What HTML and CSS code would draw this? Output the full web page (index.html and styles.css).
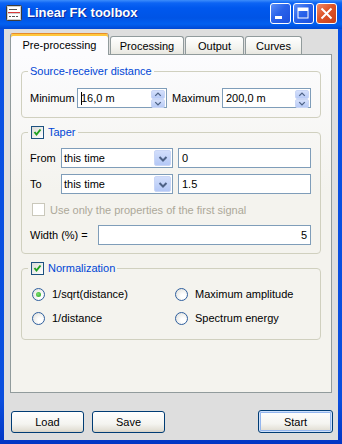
FILE: index.html
```html
<!DOCTYPE html>
<html>
<head>
<meta charset="utf-8">
<link rel="stylesheet" href="styles.css">
</head>
<body>
<div class="window">
  <div class="titlebar">
    <svg class="app-icon" width="16" height="16" viewBox="0 0 16 16">
      <rect x="0.5" y="0.5" width="15" height="15" rx="1" fill="#cfcfcf" stroke="#3c3c3c"/>
      <rect x="2" y="2" width="12" height="5" fill="#fff"/>
      <rect x="2" y="9" width="12" height="5" fill="#fff"/>
      <line x1="2" y1="7.5" x2="14" y2="7.5" stroke="#d83a3a"/>
      <path d="M3 4.5h8M3 11.5h2M6 11.5h3M10 11.5h2" stroke="#555"/>
    </svg>
    <span class="title">Linear FK toolbox</span>
    <div class="caption-buttons">
      <span class="cbtn cbtn-blue">
        <svg width="19" height="19" viewBox="0 0 19 19"><rect x="4" y="12" width="7" height="3" fill="#fff"/></svg>
      </span>
      <span class="cbtn cbtn-blue">
        <svg width="19" height="19" viewBox="0 0 19 19"><rect x="4" y="4" width="10" height="10" fill="none" stroke="#fff"/><rect x="4" y="4" width="10" height="3" fill="#fff"/></svg>
      </span>
      <span class="cbtn cbtn-red">
        <svg width="19" height="19" viewBox="0 0 19 19"><path d="M4.5 4.5L14.5 14.5M14.5 4.5L4.5 14.5" stroke="#fff" stroke-width="2"/></svg>
      </span>
    </div>
  </div>

  <div class="client">
    <div class="tabs">
      <div class="tab active t-pre">Pre-processing</div>
      <div class="tab t-proc">Processing</div>
      <div class="tab t-out">Output</div>
      <div class="tab t-curves">Curves</div>
    </div>

    <div class="pane">
      <fieldset class="group g-src">
        <legend>Source-receiver distance</legend>
        <div class="row">
          <span class="lbl lbl-min">Minimum</span>
          <div class="spin spin-min">
            <span class="value"><span class="caret"></span>16,0 m</span>
            <span class="spin-btns">
              <span class="sb"><svg width="13" height="7" viewBox="0 0 13 7"><path d="M3.5 5L6.5 2L9.5 5" fill="none" stroke="#4d6185" stroke-width="1.4"/></svg></span>
              <span class="sb"><svg width="13" height="7" viewBox="0 0 13 7"><path d="M3.5 2L6.5 5L9.5 2" fill="none" stroke="#4d6185" stroke-width="1.4"/></svg></span>
            </span>
          </div>
          <span class="lbl lbl-max">Maximum</span>
          <div class="spin spin-max">
            <span class="value">200,0 m</span>
            <span class="spin-btns">
              <span class="sb"><svg width="13" height="7" viewBox="0 0 13 7"><path d="M3.5 5L6.5 2L9.5 5" fill="none" stroke="#4d6185" stroke-width="1.4"/></svg></span>
              <span class="sb"><svg width="13" height="7" viewBox="0 0 13 7"><path d="M3.5 2L6.5 5L9.5 2" fill="none" stroke="#4d6185" stroke-width="1.4"/></svg></span>
            </span>
          </div>
        </div>
      </fieldset>

      <fieldset class="group g-taper">
        <legend class="check-legend">
          <span class="check"><svg width="11" height="11" viewBox="0 0 11 11"><path d="M2.5 5L4.5 7.5L8.5 2.5" fill="none" stroke="#21a121" stroke-width="2"/></svg></span>
          <span>Taper</span>
        </legend>
        <div class="rows">
          <div class="row">
            <span class="lbl lbl-ft">From</span>
            <div class="combo">
              <span class="value">this time</span>
              <span class="combo-btn"><svg width="14" height="15" viewBox="0 0 14 15"><path d="M3.5 6L7 9.5L10.5 6" fill="none" stroke="#4d6185" stroke-width="2"/></svg></span>
            </div>
            <div class="field">0</div>
          </div>
          <div class="row">
            <span class="lbl lbl-ft">To</span>
            <div class="combo">
              <span class="value">this time</span>
              <span class="combo-btn"><svg width="14" height="15" viewBox="0 0 14 15"><path d="M3.5 6L7 9.5L10.5 6" fill="none" stroke="#4d6185" stroke-width="2"/></svg></span>
            </div>
            <div class="field">1.5</div>
          </div>
          <div class="row row-check">
            <span class="check check-disabled"></span>
            <span class="disabled-text">Use only the properties of the first signal</span>
          </div>
          <div class="row">
            <span class="lbl lbl-width">Width (%) =</span>
            <div class="field field-right">5</div>
          </div>
        </div>
      </fieldset>

      <fieldset class="group g-norm">
        <legend class="check-legend">
          <span class="check"><svg width="11" height="11" viewBox="0 0 11 11"><path d="M2.5 5L4.5 7.5L8.5 2.5" fill="none" stroke="#21a121" stroke-width="2"/></svg></span>
          <span>Normalization</span>
        </legend>
        <div class="radio-grid">
          <div class="radio-item"><span class="radio on"></span><span>1/sqrt(distance)</span></div>
          <div class="radio-item"><span class="radio"></span><span>Maximum amplitude</span></div>
          <div class="radio-item"><span class="radio"></span><span>1/distance</span></div>
          <div class="radio-item"><span class="radio"></span><span>Spectrum energy</span></div>
        </div>
      </fieldset>
    </div>

    <div class="footer">
      <div class="btn">Load</div>
      <div class="btn btn-save">Save</div>
      <div class="btn btn-default">Start</div>
    </div>
  </div>
</div>
</body>
</html>
```

FILE: styles.css
```css
* { box-sizing: border-box; }
html, body { margin: 0; padding: 0; }
body {
  width: 342px;
  height: 444px;
  overflow: hidden;
  font-family: "Liberation Sans", Arial, sans-serif;
  font-size: 11px;
  color: #000;
  background: #fff;
}

.window {
  width: 342px;
  height: 444px;
  display: flex;
  flex-direction: column;
  background: linear-gradient(to bottom, #0850e4 0%, #0a4ede 90%, #0236c4 100%);
}

/* Title bar */
.titlebar {
  flex: none;
  height: 29px;
  display: flex;
  align-items: center;
  padding: 0 5px 4px 6px;
  background: linear-gradient(to bottom, #3d8dfb 0px, #0c64f4 3px, #0058ee 8px, #0054e6 18px, #0260f0 24px, #0048d4 29px);
}
.app-icon { flex: none; margin-right: 5px; }
.title {
  flex: 1;
  color: #fff;
  font-weight: bold;
  font-size: 13px;
  text-shadow: 1px 1px 0 #0c2a9c;
}
.caption-buttons {
  align-self: flex-start;
  margin-top: 3px;
  display: flex;
  gap: 2px;
}
.cbtn {
  width: 21px;
  height: 21px;
  border: 1px solid #fff;
  border-radius: 3px;
  display: block;
}
.cbtn svg { display: block; }
.cbtn-blue { background: linear-gradient(135deg, #5d8ff7 0%, #2a63ea 45%, #1c50de 100%); }
.cbtn-red { background: linear-gradient(135deg, #f08a6a 0%, #de5428 45%, #c8401a 100%); }

/* Client area */
.client {
  flex: 1;
  margin: 0 4px 4px;
  background: #dedede;
  display: flex;
  flex-direction: column;
  padding: 4px 6px 7px 6px;
}

.tabs {
  flex: none;
  height: 21px;
  display: flex;
  align-items: flex-end;
  position: relative;
  z-index: 1;
}
.tab {
  height: 18px;
  border: 1px solid #919b9c;
  border-bottom: none;
  border-radius: 3px 3px 0 0;
  background: linear-gradient(to bottom, #ffffff, #f4f4f0 60%, #e8e7e0);
  display: flex;
  align-items: center;
  justify-content: center;
  margin-left: 1px;
}
.tab.active {
  height: 22px;
  margin-left: 0;
  margin-bottom: -1px;
  border-top: 1px solid #e68b2c;
  box-shadow: inset 0 2px 0 #ffc83c;
  background: #fcfcfe;
  padding-top: 1px;
}
.t-pre { width: 99px; }
.t-proc { width: 74px; }
.t-out { width: 59px; }
.t-curves { width: 57px; }

.pane {
  flex: 1;
  border: 1px solid #919b9c;
  background: linear-gradient(to bottom, #fcfcfe, #f4f3ee 40%, #f4f3ee);
  padding: 9px 10px 0 10px;
  display: flex;
  flex-direction: column;
}

.group {
  margin: 0;
  border: 1px solid #d0d0bf;
  border-radius: 4px;
  min-width: 0;
}
.group + .group { margin-top: 7px; }
.group legend {
  line-height: 14px;
  padding: 0 2px;
  margin-left: -2px;
  color: #0046d5;
}
.check-legend {
  display: flex;
  align-items: center;
  gap: 4px;
  padding-left: 3px !important;
}

.g-src { padding: 10px 9px 9px 8px; }
.g-taper { padding: 9px 9px 8px 8px; }
.g-norm { padding: 9px 9px 11px 8px; }

.row {
  display: flex;
  align-items: center;
  height: 20px;
}
.rows {
  display: flex;
  flex-direction: column;
  gap: 6px;
}
.row-check { height: 19px; }

.lbl { flex: none; white-space: nowrap; }
.lbl-min { width: 47px; }
.lbl-max { width: 55px; padding-left: 5px; }
.lbl-ft { width: 31px; }
.lbl-width { width: 68px; }

/* Spin box */
.spin {
  height: 20px;
  border: 1px solid #7f9db9;
  background: #fff;
  display: flex;
  align-items: stretch;
}
.spin-min { width: 90px; flex: none; }
.spin-max { flex: 1; }
.spin .value {
  flex: 1;
  display: flex;
  align-items: center;
  padding-left: 3px;
}
.caret {
  display: inline-block;
  width: 1px;
  height: 13px;
  background: #000;
  margin-right: -1px;
}
.spin-btns {
  width: 16px;
  padding: 1px;
  display: flex;
  flex-direction: column;
}
.sb {
  flex: 1;
  border: 1px solid #c9d6f6;
  border-radius: 2px;
  background: linear-gradient(to bottom, #d5e0fb, #b7caf6);
  display: flex;
  align-items: center;
  justify-content: center;
}
.sb svg { display: block; }

/* Combo */
.combo {
  flex: none;
  width: 112px;
  height: 20px;
  border: 1px solid #7f9db9;
  background: #fff;
  display: flex;
  margin-right: 5px;
}
.combo .value {
  flex: 1;
  display: flex;
  align-items: center;
  padding-left: 2px;
}
.combo-btn {
  width: 17px;
  margin: 1px;
  border: 1px solid #c9d6f6;
  border-radius: 2px;
  background: linear-gradient(to bottom, #d2defb, #b4c8f6);
  display: flex;
  align-items: center;
  justify-content: center;
}
.combo-btn svg { display: block; }

.field {
  flex: 1;
  height: 20px;
  border: 1px solid #7f9db9;
  background: #fff;
  display: flex;
  align-items: center;
  padding-left: 3px;
}
.field-right {
  justify-content: flex-end;
  padding-right: 3px;
}

/* Checkbox */
.check {
  flex: none;
  width: 13px;
  height: 13px;
  border: 1px solid #1c5180;
  background: linear-gradient(135deg, #dcdcd7, #ffffff);
  display: inline-flex;
  align-items: center;
  justify-content: center;
}
.check svg { display: block; }
.check-disabled {
  margin-left: 2px;
  margin-right: 5px;
  border-color: #cac8bb;
  background: #fff;
}
.disabled-text { color: #aca899; white-space: nowrap; }

/* Radios */
.radio-grid {
  display: grid;
  grid-template-columns: 143px 1fr;
  grid-auto-rows: 20px;
  row-gap: 4px;
}
.radio-item {
  display: flex;
  align-items: center;
  gap: 7px;
  padding-left: 2px;
}
.radio {
  flex: none;
  width: 13px;
  height: 13px;
  border: 1px solid #2f5f9e;
  border-radius: 50%;
  background: radial-gradient(circle at 65% 65%, #ffffff 20%, #dcdcd7 100%);
  display: flex;
  align-items: center;
  justify-content: center;
}
.radio.on::after {
  content: "";
  width: 5px;
  height: 5px;
  border-radius: 50%;
  background: radial-gradient(circle at 40% 40%, #7ede6e, #21a121);
}

/* Footer buttons */
.footer {
  flex: none;
  height: 23px;
  margin: 17px -1px 0 1px;
  display: flex;
  align-items: center;
}
.btn {
  width: 73px;
  height: 22px;
  border: 1px solid #003c74;
  border-radius: 3px;
  background: linear-gradient(to bottom, #ffffff, #f4f4f0 60%, #e3e0d6 90%, #d6d0c5);
  display: flex;
  align-items: center;
  justify-content: center;
}
.btn-save { margin-left: 8px; }
.btn-default {
  margin-left: auto;
  width: 75px;
  height: 23px;
  box-shadow: inset 0 0 0 1px #cee0fb, inset 0 0 0 2px #94b6ee;
}
```
